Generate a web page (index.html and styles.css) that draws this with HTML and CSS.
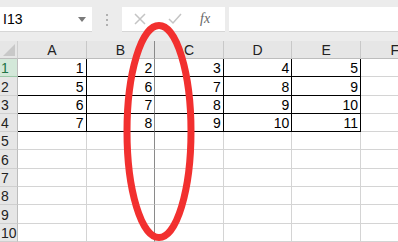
FILE: index.html
```html
<!DOCTYPE html>
<html lang="zh">
<head>
  <meta charset="UTF-8">
  <title>Sheet</title>
  <link rel="stylesheet" href="styles.css">
</head>
<body>
  <div class="app">
    <!-- formula bar -->
    <div class="toolbar">
      <div class="namebox">
        <span>I13</span>
        <svg class="caret" width="8" height="5" viewBox="0 0 8 5"><path d="M0 0h8L4 5z" fill="#7a7a7a"/></svg>
      </div>
      <div class="grip"><i></i><i></i><i></i></div>
      <div class="actions">
        <svg width="12" height="12" viewBox="0 0 12 12"><path d="M1 1l10 10M11 1L1 11" stroke="#c4c4c4" stroke-width="1.5"/></svg>
        <svg width="14" height="12" viewBox="0 0 14 12"><path d="M1 6l4 4 8-9" stroke="#c4c4c4" stroke-width="1.5" fill="none"/></svg>
        <span class="fx">fx</span>
      </div>
      <div class="formula"></div>
    </div>

    <!-- grid -->
    <div class="sheet">
      <div class="corner"><svg width="12" height="12" viewBox="0 0 12 12"><path d="M12 0v12H0z" fill="#c8c8c8"/></svg></div>
      <div class="colhead">A</div>
      <div class="colhead sep">B</div>
      <div class="colhead">C</div>
      <div class="colhead">D</div>
      <div class="colhead">E</div>
      <div class="colhead">F</div>

      <div class="rowhead active">1</div>
      <div class="cell data rb">1</div>
      <div class="cell data sep">2</div>
      <div class="cell data rb">3</div>
      <div class="cell data rb">4</div>
      <div class="cell data rb">5</div>
      <div class="cell"></div>

      <div class="rowhead">2</div>
      <div class="cell data rb">5</div>
      <div class="cell data sep">6</div>
      <div class="cell data rb">7</div>
      <div class="cell data rb">8</div>
      <div class="cell data rb">9</div>
      <div class="cell"></div>

      <div class="rowhead">3</div>
      <div class="cell data rb">6</div>
      <div class="cell data sep">7</div>
      <div class="cell data rb">8</div>
      <div class="cell data rb">9</div>
      <div class="cell data rb">10</div>
      <div class="cell"></div>

      <div class="rowhead">4</div>
      <div class="cell data rb">7</div>
      <div class="cell data sep">8</div>
      <div class="cell data rb">9</div>
      <div class="cell data rb">10</div>
      <div class="cell data rb">11</div>
      <div class="cell"></div>

      <div class="rowhead">5</div>
      <div class="cell"></div><div class="cell sep"></div><div class="cell"></div><div class="cell"></div><div class="cell"></div><div class="cell"></div>
      <div class="rowhead">6</div>
      <div class="cell"></div><div class="cell sep"></div><div class="cell"></div><div class="cell"></div><div class="cell"></div><div class="cell"></div>
      <div class="rowhead">7</div>
      <div class="cell"></div><div class="cell sep"></div><div class="cell"></div><div class="cell"></div><div class="cell"></div><div class="cell"></div>
      <div class="rowhead">8</div>
      <div class="cell"></div><div class="cell sep"></div><div class="cell"></div><div class="cell"></div><div class="cell"></div><div class="cell"></div>
      <div class="rowhead">9</div>
      <div class="cell"></div><div class="cell sep"></div><div class="cell"></div><div class="cell"></div><div class="cell"></div><div class="cell"></div>
      <div class="rowhead">10</div>
      <div class="cell"></div><div class="cell sep"></div><div class="cell"></div><div class="cell"></div><div class="cell"></div><div class="cell"></div>
    </div>

    <!-- red mark drawn over the sheet -->
    <svg class="mark" width="398" height="242" viewBox="0 0 398 242">
      <ellipse cx="159" cy="131.5" rx="32" ry="106" fill="none" stroke="#f2302f" stroke-width="7"/>
    </svg>
  </div>
</body>
</html>
```

FILE: styles.css
```css
body {
  margin: 0;
  font-family: "Liberation Sans", Arial, sans-serif;
  background: #ececec;
  color: #000;
}

.app {
  position: relative;
  width: 398px;
  height: 242px;
  overflow: hidden;
}

/* formula bar */
.toolbar {
  display: flex;
  align-items: stretch;
  height: 25px;
  padding: 7px 0 9px;
}

.namebox {
  width: 92px;
  background: #fff;
  border-bottom: 1px solid #d6d6d6;
  display: flex;
  align-items: center;
  justify-content: space-between;
  padding: 0 6px 0 3px;
  box-sizing: border-box;
  font-size: 14px;
}

.grip {
  width: 30px;
  display: flex;
  flex-direction: column;
  align-items: center;
  justify-content: center;
  gap: 3px;
}

.grip i {
  width: 2px;
  height: 2px;
  background: #b0b0b0;
}

.actions {
  width: 103px;
  background: #fff;
  border-bottom: 1px solid #d6d6d6;
  display: flex;
  align-items: center;
  gap: 0;
  padding-left: 12px;
  box-sizing: border-box;
}

.actions svg:first-child {
  margin-right: 22px;
}

.actions svg:nth-child(2) {
  margin-right: 18px;
}

.fx {
  font-family: "Liberation Serif", serif;
  font-style: italic;
  font-size: 14px;
  color: #666;
}

.formula {
  flex: 1;
  margin-left: 4px;
  background: #fff;
  border-bottom: 1px solid #d6d6d6;
}

/* grid */
.sheet {
  display: grid;
  grid-template-columns: 18px repeat(6, 68.6px);
  grid-template-rows: 18px;
  grid-auto-rows: 18.3px;
  background: #fff;
  font-size: 14px;
}

.corner {
  background: #e6e6e6;
  border-right: 1px solid #cfcfcf;
  border-bottom: 1px solid #bdbdbd;
  display: flex;
  align-items: flex-end;
  justify-content: flex-end;
  padding: 0 2px 2px 0;
  box-sizing: border-box;
}

.colhead {
  background: #e6e6e6;
  border-right: 1px solid #c8c8c8;
  border-bottom: 1px solid #bdbdbd;
  text-align: center;
  line-height: 18px;
  color: #222;
}

.rowhead {
  background: #e6e6e6;
  border-right: 1px solid #bdbdbd;
  border-bottom: 1px solid #cfcfcf;
  padding-left: 1px;
  display: flex;
  align-items: flex-end;
  line-height: 16px;
  color: #222;
}

.rowhead.active {
  background: #d3e8d9;
  color: #217346;
  border-bottom-color: #9cc8a8;
}

.cell {
  border-right: 1px solid #d4d4d4;
  border-bottom: 1px solid #d4d4d4;
}

.data {
  display: flex;
  align-items: flex-end;
  justify-content: flex-end;
  padding-right: 2px;
  line-height: 16px;
  border-bottom-color: #000;
}

.rb {
  border-right-color: #000;
}

.sep {
  border-right-color: #8a8a8a;
}

.mark {
  position: absolute;
  left: 0;
  top: 0;
}
```
